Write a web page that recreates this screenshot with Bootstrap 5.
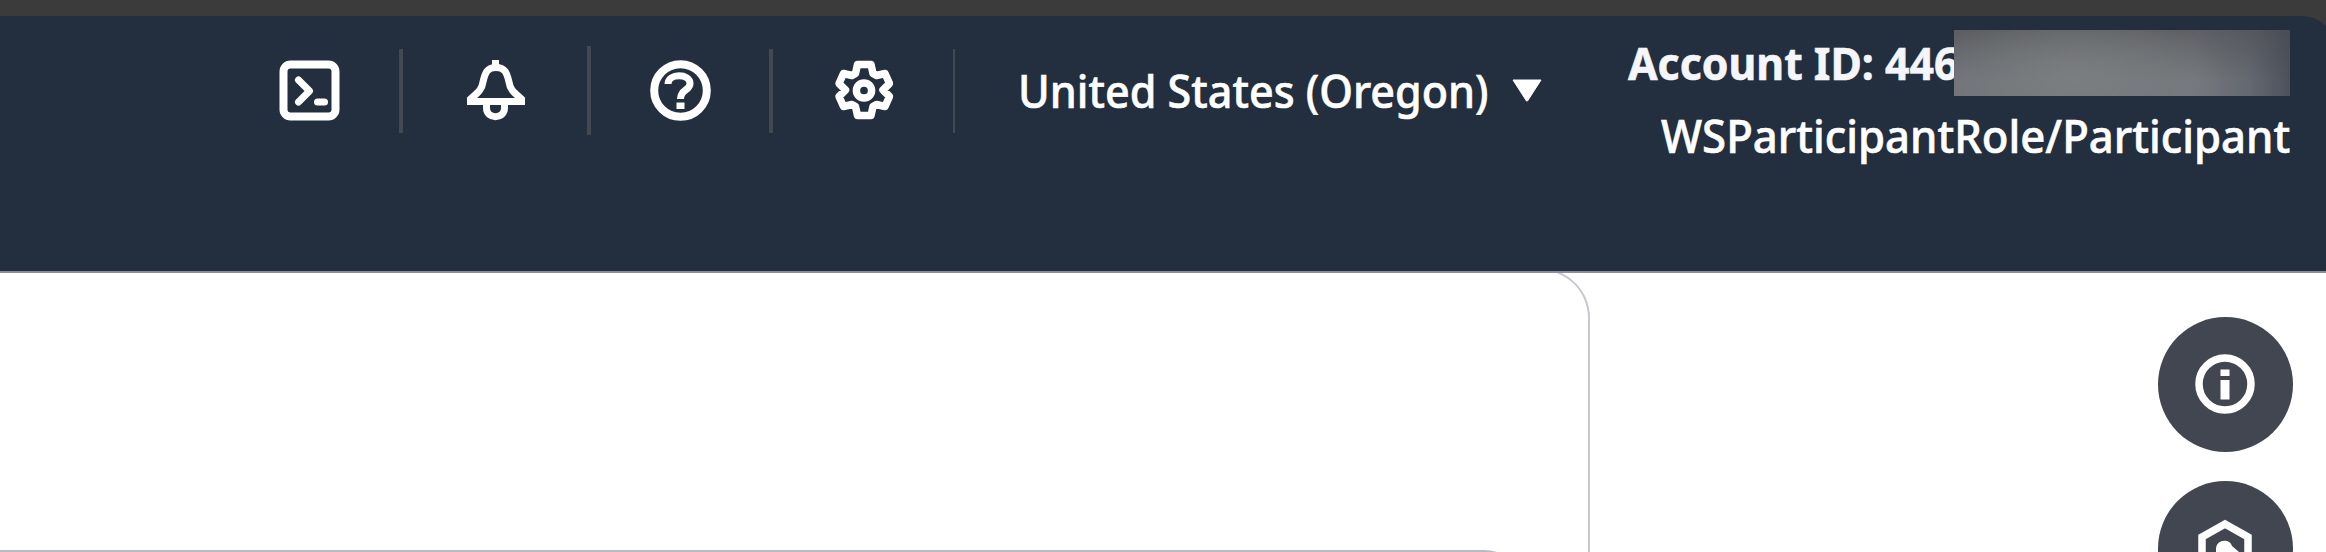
<!DOCTYPE html>
<html lang="en">
<head>
<meta charset="utf-8">
<title>Console</title>
<link rel="stylesheet" href="https://cdn.jsdelivr.net/npm/bootstrap@5.3.0/dist/css/bootstrap.min.css">
<style>
body{font-family:"Noto Sans","Open Sans",sans-serif;height:552px;background:#fff}
.window-edge{height:16px;background:#3b3b3b}
.topbar{height:257px;background:#232f3e;border-bottom:2px solid #8b8e97;border-top-right-radius:34px;color:#fff;padding-left:264px;z-index:2;margin-right:-10px}
.window-frame{background:#3b3b3b}
.tool{margin-top:29px;height:90px;background:none;border:0;color:#fff;padding:0}
.tool svg{display:block}
.rule{width:4px;height:84px;margin-top:33px;background:#424950;flex:none}
.fit{display:block;width:max-content;white-space:nowrap;line-height:50px;transform-origin:0 50%;font-size:45px;font-weight:500;-webkit-text-stroke:.6px currentColor}
.region{width:468px;height:50px;margin:50px 0 0 63px}
.account{width:662px;margin-left:86px;padding-top:14px}
.id-row{height:66px}
.id-text{width:326px;height:50px;margin-top:8px;color:#f5f6fa}
.id-text .fit{font-weight:700}
.redacted{width:336px;height:66px;background:radial-gradient(ellipse 150px 70px at 36% 75%,#7b7e81 0,rgba(120,123,126,0) 100%),linear-gradient(180deg,rgba(70,72,76,.5),rgba(90,92,98,0) 75%),linear-gradient(90deg,#707377 0,#74777b 72%,#646870 88%,#4c515c 100%)}
.role{width:628px;height:50px;margin:15px 0 0 33px}
.page{height:279px}
.panel{width:1590px;height:330px;margin-top:-5px;border:2px solid #c7c8d0;border-left:0;border-radius:0 50px 0 0;padding-top:280px}
.inner{width:1528px;height:60px;border:2px solid #b9bac2;border-left:0;border-radius:0 44px 0 0}
.helpers{width:135px;margin-right:33px;padding-top:44px;gap:29px}
.round-btn{width:135px;height:135px;flex:none;background:#424650;color:#fff;border:0;padding:0}
</style>
<script src="https://cdn.jsdelivr.net/npm/bootstrap@5.3.0/dist/js/bootstrap.bundle.min.js"></script>
</head>
<body class="overflow-hidden">
<div class="window-frame overflow-hidden">
<div class="window-edge"></div>
<header class="topbar position-relative d-flex align-items-start">
  <button class="tool" aria-label="CloudShell"><svg width="90" height="90" viewBox="0 0 90 90" fill="none" stroke="currentColor" stroke-width="8"><rect x="19.500" y="19.500" width="52" height="52" rx="7"/><path d="M34.500 35L45.500 46L34.500 57" stroke-width="7" stroke-linecap="round" stroke-linejoin="round"/><path d="M53.500 57h7" stroke-width="7" stroke-linecap="round"/></svg></button>
  <div class="rule" style="margin-left:45px"></div>
  <button class="tool" style="margin-left:48px" aria-label="Notifications"><svg width="90" height="90" viewBox="0 0 90 90" fill="none" stroke="currentColor" stroke-width="7"><path d="M44.500 15v6M35.500 58v5C35.500 74.500 53.500 74.500 53.500 63v-5M16 56.500h58"/><path d="M18 55.500C26 48 31 45 32 37C34 28 36 22.500 45 22.500C54 22.500 56 28 58 37C59 45 64 48 72 55.500"/></svg></button>
  <div class="rule" style="margin-left:46px;height:89px;margin-top:30px"></div>
  <button class="tool" style="margin-left:44px" aria-label="Help"><svg width="90" height="90" viewBox="0 0 90 90" fill="none" stroke="currentColor" stroke-width="7"><circle cx="45.500" cy="45.500" r="26.300" stroke-width="8"/><path d="M33 39C33 28 55 28 55 38.500C55 46 45.500 44 45.500 54"/><path d="M41.500 57.500h8v6.500h-8z" fill="currentColor" stroke="none"/></svg></button>
  <div class="rule" style="margin-left:44px"></div>
  <button class="tool" style="margin-left:46px" aria-label="Settings"><svg width="90" height="90" viewBox="0 0 90 90" fill="none" stroke="currentColor" stroke-width="7.500" stroke-linejoin="round"><path d="M38.500 19.500h13.500l2 9l3.500 2l8.500-2l4.500 10l-6.500 6.500l6.500 6.500l-4.500 10l-8.500-2l-3.500 2l-2 9H38.500l-2-9l-3.500-2l-8.500 2l-4.500-10l6.500-6.500l-6.500-6.500l4.500-10l8.500 2l3.500-2z"/><circle cx="45" cy="45.500" r="7.600"/></svg></button>
  <div class="rule" style="margin-left:44px;width:2px"></div>
  <div class="region"><span class="fit" data-width="471">United States (Oregon)</span></div>
  <svg width="30" height="23" style="margin:63px 0 0 26px" class="flex-shrink-0"><path d="M1 1H29L15.500 22H14.500Z" fill="#fff" stroke="#fff"/></svg>
  <div class="account flex-shrink-0">
    <div class="id-row d-flex">
      <div class="id-text"><span class="fit" data-width="330">Account ID: 446</span></div>
      <div class="redacted position-relative z-1"></div>
    </div>
    <div class="role"><span class="fit" data-width="629">WSParticipantRole/Participant</span></div>
  </div>
</header>
</div>
<main class="page d-flex justify-content-between overflow-hidden">
  <section class="panel flex-shrink-0"><div class="inner"></div></section>
  <aside class="helpers d-flex flex-column">
    <button class="round-btn rounded-circle" aria-label="Info"><svg class="d-block" width="135" height="135" fill="none" stroke="currentColor"><circle cx="67" cy="67" r="26" stroke-width="7.500"/><path d="M62.500 52.500h9v6.500h-9zM62.500 63h9v19.500h-9z" fill="currentColor" stroke="none"/></svg></button>
    <button class="round-btn rounded-circle" aria-label="Security"><svg class="d-block" width="135" height="135" fill="none" stroke="currentColor"><path d="M44 56L67 43L90 56V80L67 94L44 80Z" stroke-width="7.500"/><path d="M58 75V68C58 58 72 57 74 65L81 71V76Z" fill="currentColor" stroke="none"/></svg></button>
  </aside>
</main>
<script>
document.querySelectorAll('.fit').forEach(function(el){
  el.style.transform='scaleX('+(el.dataset.width/el.offsetWidth)+')';
});
</script>
</body>
</html>
